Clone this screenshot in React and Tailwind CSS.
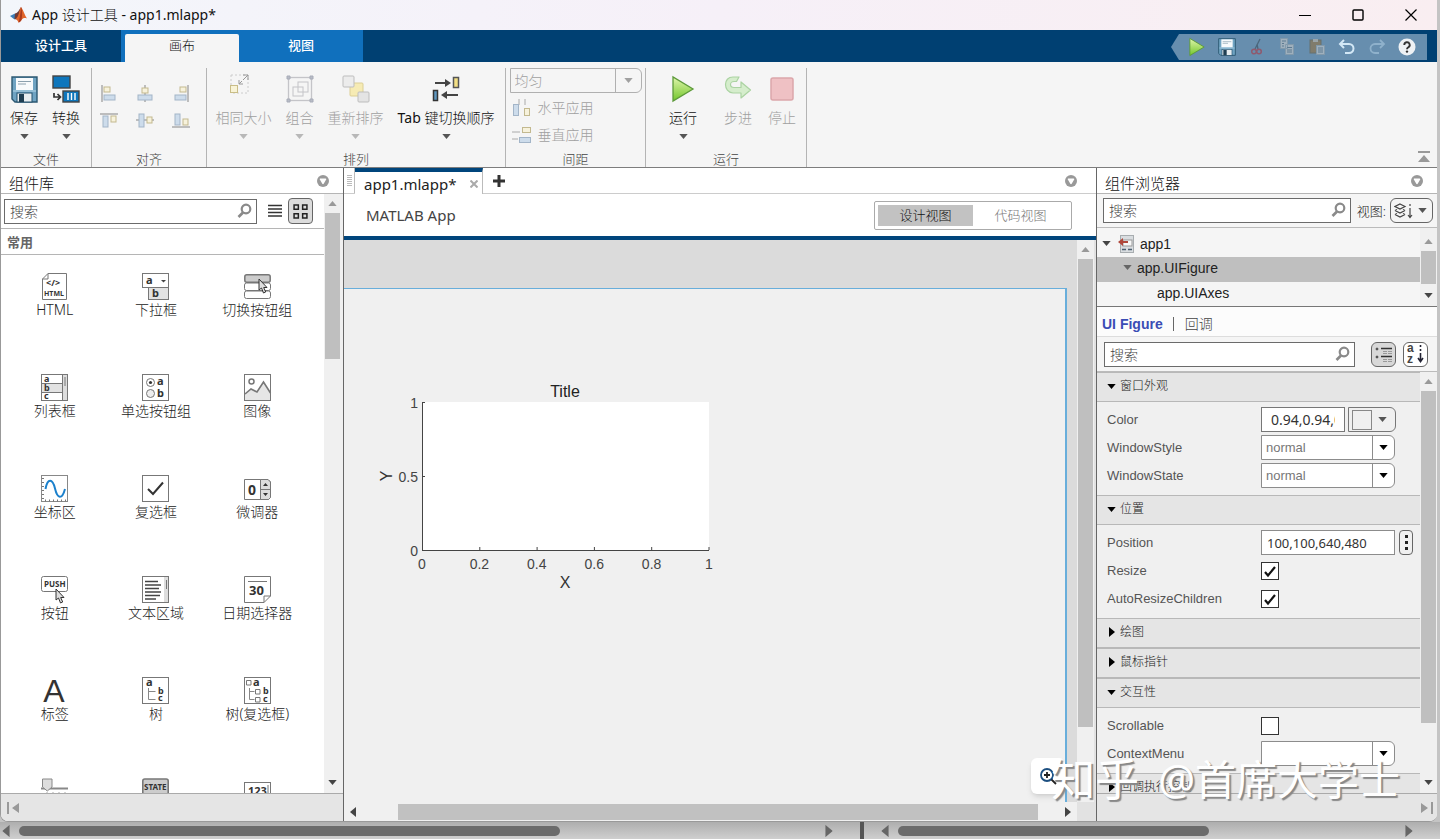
import React from 'react';
import clsx from 'clsx';

const Caret = ({ className }) => (
  <svg viewBox="0 0 10 6" className={clsx('w-[9px] h-[5px] shrink-0', className)}>
    <path d="M0 0h10L5 6z" fill="currentColor" />
  </svg>
);

const CaretRight = ({ className }) => (
  <svg viewBox="0 0 6 10" className={clsx('w-[6px] h-[10px] shrink-0', className)}>
    <path d="M0 0v10l6-5z" fill="currentColor" />
  </svg>
);

const SearchIcon = () => (
  <svg viewBox="0 0 16 16" className="w-4 h-4 absolute right-1 top-1 pointer-events-none" fill="none" stroke="#8a8a8a">
    <circle cx="9" cy="6" r="4.3" strokeWidth="2.200" />
    <path d="M6 9.500L1.500 14" strokeWidth="2.600" />
  </svg>
);

const PanelMenuIcon = () => (
  <svg viewBox="0 0 12 12" className="w-3 h-3">
    <circle cx="6" cy="6" r="6" fill="#999" />
    <path d="M3.500 4.200h5L6 8.300z" fill="#fff" stroke="#fff" strokeWidth="1.600" strokeLinejoin="round" />
  </svg>
);

const MatlabLogo = () => (
  <svg viewBox="0 0 20 18" className="w-5 h-[18px]">
    <path d="M1 10l5-2.500 3 2.500-3.500 3.500z" fill="#3c7fb8" />
    <path d="M6 7.500c3-.5 4-3.500 6-6.500l-2 9-2.500 3.500-2-.5z" fill="#6f3a35" />
    <path d="M12 1c2 2 3.500 8 6 11.500-2.500-1-4-.5-5.500 1.500-1 1.500-2 2.500-3 2.500-.5-1.500-1.500-3-3-3.500C10 11 10 4 12 1z" fill="#e0642a" />
    <path d="M12 1c1.200 2 1.500 8 .5 13-1 1.500-2 2.500-3 2.500C11 12 11.500 6 12 1z" fill="#a93a1d" />
  </svg>
);

const FloppyIcon = ({ className }) => (
  <svg viewBox="0 0 27 27" className={className}>
    <path d="M1 1h25v25H4l-3-3z" fill="#6fa3c2" stroke="#2c5872" strokeWidth="1.400" />
    <rect x="5" y="2" width="17" height="12" fill="#f7fafc" />
    <path d="M7 5.500h13M7 8h8" stroke="#8aa0ae" />
    <path d="M2 15h23" stroke="#b9d8e8" />
    <rect x="6" y="17" width="15" height="9" fill="#e8edf0" stroke="#24526f" />
    <rect x="8" y="18" width="5" height="8" fill="#1f3e52" />
  </svg>
);

const ConvertIcon = () => (
  <svg viewBox="0 0 28 28" className="w-7 h-7" fill="#0e76bc" stroke="#444" strokeWidth="1.400">
    <rect x="1" y="1" width="17" height="12" />
    <rect x="11" y="16" width="16" height="11" />
    <path d="M16 18v7M19.500 18v7M23 18v7" stroke="#fff" />
    <path d="M2 18v4h6M5.500 19l3 3-3 3" fill="none" stroke="#333" strokeWidth="1.700" />
  </svg>
);

const alignShapes = [
  { line: 'M2 0v17', a: [4, 2, 6, 5], b: [4, 10, 11, 5], label: '左对齐' },
  { line: 'M9 0v17', a: [6, 3, 6, 5], b: [2, 10, 14, 5], label: '水平居中' },
  { line: 'M16 0v17', a: [8, 2, 6, 5], b: [3, 10, 11, 5], label: '右对齐' },
  { line: 'M0 2h18', a: [11, 4, 5, 6], b: [3, 4, 5, 11], label: '顶端对齐' },
  { line: 'M0 8h18', a: [11, 5, 5, 6], b: [3, 2, 5, 13], label: '垂直居中' },
  { line: 'M0 15h18', a: [11, 7, 5, 6], b: [3, 2, 5, 11], label: '底端对齐' }
];

const AlignIcon = ({ shape }) => (
  <svg viewBox="0 0 18 18" className="w-[18px] h-[18px]">
    <path d={shape.line} stroke="#a5a5a5" strokeWidth="1.400" />
    <rect x={shape.a[0]} y={shape.a[1]} width={shape.a[2]} height={shape.a[3]} fill="#f7f2dc" stroke="#c3b98f" />
    <rect x={shape.b[0]} y={shape.b[1]} width={shape.b[2]} height={shape.b[3]} fill="#cddceb" stroke="#a3b5c8" />
  </svg>
);

const SameSizeIcon = () => (
  <svg viewBox="0 0 22 22" className="w-[22px] h-[22px] mb-2 mr-2" fill="none">
    <rect x="2" y="1" width="17" height="18" stroke="#ccc" strokeDasharray="2 2" />
    <rect x="1.500" y="11.500" width="7" height="7" fill="#f8f3d6" stroke="#c9bd87" />
    <path d="M14 1h5v5M19 1l-5 5M10 6v4h4M10 10l3-3" stroke="#999" />
  </svg>
);

const GroupIcon = () => (
  <svg viewBox="0 0 28 28" className="w-7 h-7" fill="none" stroke="#c4c4c8">
    <rect x="2.500" y="2.500" width="23" height="23" strokeWidth="1.300" />
    <rect x="7" y="12" width="10" height="9" />
    <rect x="12" y="7" width="10" height="10" />
    <path d="M1 1h3v3H1zM24 1h3v3h-3zM1 24h3v3H1zM24 24h3v3h-3z" fill="#b8bcc6" stroke="#a8acb8" />
  </svg>
);

const ReorderIcon = () => (
  <svg viewBox="0 0 28 28" className="w-7 h-7">
    <rect x="8" y="8" width="13" height="13" rx="1" fill="#f6ebb4" stroke="#dccf95" />
    <rect x="1" y="1" width="11" height="11" rx="1" fill="#ececec" stroke="#bdbdbd" />
    <rect x="16" y="17" width="11" height="10" rx="1" fill="#e4e4e4" stroke="#bdbdbd" />
  </svg>
);

const TabOrderIcon = () => (
  <svg viewBox="0 0 28 28" className="w-7 h-7">
    <path d="M3 8h13M26 20H13" stroke="#444" strokeWidth="2" />
    <path d="M13 4l6 4-6 4zM15 16l-6 4 6 4z" fill="#444" />
    <rect x="21.500" y="2.500" width="5" height="10" fill="#f3df84" stroke="#555" strokeWidth="1.500" />
    <rect x="1.500" y="15.500" width="4" height="10" fill="#5f97bf" stroke="#333" strokeWidth="1.500" />
  </svg>
);

const PlayIcon = ({ className }) => (
  <svg viewBox="0 0 24 28" className={className}>
    <defs>
      <linearGradient id="play" x1="0" y1="0" x2="0" y2="1">
        <stop offset="0" stopColor="#e0f5ac" />
        <stop offset="1" stopColor="#72c62a" />
      </linearGradient>
    </defs>
    <path d="M2 2v24l20-12z" fill="url(#play)" stroke="#5d9a3a" strokeWidth="1.300" />
  </svg>
);

const StepIcon = () => (
  <svg viewBox="0 0 28 28" className="w-7 h-7">
    <path
      d="M15 2H9C4 2 1.500 5.500 1.500 9.500S4 17.500 9 18h8v5l9.500-8L17 7v5.500h-7c-2.500 0-3.500-1.300-3.500-3S8 6.500 10 6.500h2.500z"
      fill="#d5edcc" stroke="#abd3a2" strokeWidth="1.200" strokeLinejoin="round"
    />
  </svg>
);

const StopIcon = () => (
  <svg viewBox="0 0 28 28" className="w-7 h-7">
    <rect x="3" y="3" width="22" height="22" rx="2" fill="#efc1c4" stroke="#dba6aa" strokeWidth="1.500" />
  </svg>
);

const HSpaceIcon = () => (
  <svg viewBox="0 0 20 20" className="w-5 h-5">
    <path d="M7 1v6M13 1v6" stroke="#aaa" />
    <rect x="1.500" y="6.500" width="5" height="11" fill="#cddceb" stroke="#a3b5c8" />
    <rect x="12.500" y="10.500" width="5" height="7" fill="#f7f2dc" stroke="#c3b98f" />
  </svg>
);

const VSpaceIcon = () => (
  <svg viewBox="0 0 20 20" className="w-5 h-5">
    <path d="M0 7h8M0 14h6" stroke="#aaa" />
    <rect x="10.500" y="2.500" width="8" height="5" fill="#f7f2dc" stroke="#c3b98f" />
    <rect x="7.500" y="12.500" width="11" height="5" fill="#cddceb" stroke="#a3b5c8" />
  </svg>
);

const quickActions = [
  { label: '运行', icon: <PlayIcon className="w-5 h-5" /> },
  { label: '保存', icon: <FloppyIcon className="w-[18px] h-[18px]" /> },
  {
    label: '剪切',
    icon: (
      <svg viewBox="0 0 18 18" className="w-[18px] h-[18px]" fill="none">
        <path d="M12 1L7 11M9 6l1 5" stroke="#4b667c" strokeWidth="1.300" />
        <circle cx="6" cy="13.500" r="2.300" stroke="#8f5a6e" strokeWidth="1.500" />
        <circle cx="11" cy="13.500" r="2.300" stroke="#8f5a6e" strokeWidth="1.500" />
      </svg>
    )
  },
  {
    label: '复制',
    icon: (
      <svg viewBox="0 0 18 18" className="w-[18px] h-[18px]" fill="#9fb0bd" stroke="#8199ab">
        <path d="M2.500 .5h7v10h-7zM7.500 6.500h8v10h-8z" />
        <path d="M4 3h4M4 5.500h2M4 8h2M9 9.500h5M9 12h5M9 14h5" stroke="#5d7a91" />
      </svg>
    )
  },
  {
    label: '粘贴',
    icon: (
      <svg viewBox="0 0 18 18" className="w-[18px] h-[18px]">
        <rect x="2" y="2" width="11" height="13" fill="#807c6c" stroke="#66706f" />
        <rect x="5" y="1" width="5" height="3" fill="#9aa4a8" />
        <rect x="8.500" y="7.500" width="8" height="9" fill="#9fb0bd" stroke="#8199ab" />
        <path d="M10 10h5M10 12h5M10 14h5" stroke="#5d7a91" />
      </svg>
    )
  },
  {
    label: '撤销',
    icon: (
      <svg viewBox="0 0 18 18" className="w-[18px] h-[18px]" fill="none" stroke="#d3e8f6" strokeWidth="2">
        <path d="M6 2L2 6l4 4M2 6h9a4 4 0 0 1 0 9H7" />
      </svg>
    )
  },
  {
    label: '重做',
    icon: (
      <svg viewBox="0 0 18 18" className="w-[18px] h-[18px]" fill="none" stroke="#8fb1cb" strokeWidth="1.800">
        <path d="M12 2l4 4-4 4M16 6H7a4 4 0 0 0 0 9h4" />
      </svg>
    )
  },
  {
    label: '帮助',
    icon: (
      <svg viewBox="0 0 18 18" className="w-[18px] h-[18px]">
        <circle cx="9" cy="9" r="8.500" fill="#eef1f4" />
        <path d="M6.300 7a2.700 2.700 0 1 1 4 2.300c-1 .6-1.300 1-1.300 2" fill="none" stroke="#333" strokeWidth="1.900" />
        <circle cx="9" cy="13.600" r="1.200" fill="#333" />
      </svg>
    )
  }
];

/* Component library icons, all on a 27px grid */
const LibIcon = ({ children }) => (
  <svg viewBox="0 0 27 27" className="w-[27px] h-[27px] overflow-visible" fill="none" stroke="#777" fontFamily="Noto Sans" fontWeight="bold" fontSize="10">
    {children}
  </svg>
);

const T = ({ x, y, size = 11, children }) => (
  <text x={x} y={y} fontSize={size} fill="#333" stroke="none">{children}</text>
);

const Pointer = ({ x, y }) => (
  <path d={`M${x} ${y}v11l2.500-2 2 5 2.200-1-2-4.500h3.300z`} fill="#ddd" stroke="#333" />
);

const library = [
  {
    name: 'HTML',
    icon: (
      <LibIcon>
        <path d="M7 .5h18.500v26h-24V6zM7 .5V6H1.500" />
        <T x="5" y="13" size={9}>{'</>'}</T>
        <T x="3" y="23" size={7}>HTML</T>
      </LibIcon>
    )
  },
  {
    name: '下拉框',
    icon: (
      <LibIcon>
        <rect x=".5" y=".5" width="26" height="14" />
        <rect x="6.500" y="14.500" width="20" height="12" fill="#e2e2e2" />
        <T x="4" y="11">a</T>
        <T x="10" y="24">b</T>
        <path d="M19 7h5l-2.500 2.500z" fill="#444" stroke="none" />
      </LibIcon>
    )
  },
  {
    name: '切换按钮组',
    icon: (
      <LibIcon>
        <rect x=".8" y="1.800" width="25.400" height="7.500" rx="2" fill="#ccc" strokeWidth="1.500" />
        <rect x=".5" y="10" width="26" height="7.500" rx="2" />
        <rect x=".5" y="18" width="26" height="7.500" rx="2" />
        <Pointer x={15} y={6} />
      </LibIcon>
    )
  },
  {
    name: '列表框',
    icon: (
      <LibIcon>
        <rect x=".5" y=".5" width="26" height="26" />
        <rect x="1" y="10" width="20" height="8" fill="#e2e2e2" stroke="none" />
        <rect x="21.500" y=".5" width="5" height="26" fill="#ddd" />
        <path d="M1 9.500h20M1 18.500h20M24 3v9" />
        <T x="3" y="8" size={9}>a</T>
        <T x="3" y="17" size={9}>b</T>
        <T x="3" y="25" size={9}>c</T>
      </LibIcon>
    )
  },
  {
    name: '单选按钮组',
    icon: (
      <LibIcon>
        <rect x=".5" y=".5" width="26" height="26" />
        <circle cx="8.500" cy="8.500" r="4" />
        <circle cx="8.500" cy="8.500" r="1.600" fill="#333" stroke="none" />
        <circle cx="8.500" cy="19.500" r="4" fill="#eee" />
        <T x="15" y="11">a</T>
        <T x="15" y="23">b</T>
      </LibIcon>
    )
  },
  {
    name: '图像',
    icon: (
      <LibIcon>
        <path d="M1 20l6-5 6 3 6.500-10 7 11V26H1z" fill="#e6e6e6" stroke="none" />
        <rect x=".5" y=".5" width="26" height="26" />
        <circle cx="7.500" cy="7.500" r="2.500" strokeWidth="1.500" />
        <path d="M1 20l6-5 6 3 6.500-10 7 11" strokeWidth="1.600" />
      </LibIcon>
    )
  },
  {
    name: '坐标区',
    icon: (
      <LibIcon>
        <rect x=".5" y=".5" width="26" height="26" stroke="#888" />
        <path d="M2 3v22M4 25.500h21" strokeDasharray="1 3" strokeWidth="2" />
        <path d="M4.500 14c2-11 7-11 9.500-.5s7 11.500 10 .5" stroke="#1b80cc" strokeWidth="2" />
      </LibIcon>
    )
  },
  {
    name: '复选框',
    icon: (
      <LibIcon>
        <rect x=".5" y=".5" width="26" height="26" />
        <path d="M6 14l5 5L21 7.500" stroke="#333" strokeWidth="2" />
      </LibIcon>
    )
  },
  {
    name: '微调器',
    icon: (
      <LibIcon>
        <path d="M.5 4.500H24l2.500 2.500v15.500l-2 2H.5z" />
        <path d="M16.500 4.500H24l2.500 2.500v15.500l-2 2h-8z" fill="#ddd" />
        <path d="M16.500 14.500h10" />
        <path d="M19 11l2.500-3 2.500 3zM19 18l2.500 3 2.500-3z" fill="#333" stroke="none" />
        <T x="4" y="20" size={14}>0</T>
      </LibIcon>
    )
  },
  {
    name: '按钮',
    icon: (
      <LibIcon>
        <rect x=".5" y=".5" width="26" height="15" rx="2" />
        <T x="3" y="11" size={8}>PUSH</T>
        <Pointer x={15} y={13} />
      </LibIcon>
    )
  },
  {
    name: '文本区域',
    icon: (
      <LibIcon>
        <rect x=".5" y=".5" width="26" height="26" />
        <rect x="22" y="1" width="4" height="25" fill="#ddd" stroke="none" />
        <path d="M3 5.500h13M3 9h16M3 12.500h14M3 16h16M3 19.500h15M3 23h11" stroke="#444" strokeWidth="1.500" />
        <path d="M24.500 4v9" />
      </LibIcon>
    )
  },
  {
    name: '日期选择器',
    icon: (
      <LibIcon>
        <path d="M.5 .5h26V20l-6.500 6.500H.5zM20 26.500V20h6.500M4 5.500h19" />
        <T x="5" y="19" size={13}>30</T>
      </LibIcon>
    )
  },
  {
    name: '标签',
    icon: (
      <LibIcon>
        <text x="13" y="25" textAnchor="middle" fontFamily="Liberation Sans" fontWeight="400" fontSize="32" fill="#333" stroke="none">A</text>
      </LibIcon>
    )
  },
  {
    name: '树',
    icon: (
      <LibIcon>
        <rect x=".5" y=".5" width="26" height="26" />
        <path d="M6.500 11v11.500h7M6.500 14.500h7" stroke="#888" />
        <T x="4" y="9">a</T>
        <T x="16" y="17" size={9}>b</T>
        <T x="16" y="24" size={9}>c</T>
      </LibIcon>
    )
  },
  {
    name: '树(复选框)',
    icon: (
      <LibIcon>
        <rect x=".5" y=".5" width="26" height="26" />
        <path d="M5.500 11v11.500h5M5.500 14.500h5" stroke="#888" />
        <path d="M2.500 3.500h4.500v4.500H2.500zM11.500 12.500H16V17h-4.500zM11.500 20.500H16V25h-4.500z" />
        <T x="9" y="9">a</T>
        <T x="19" y="17" size={9}>b</T>
        <T x="19" y="25" size={9}>c</T>
      </LibIcon>
    )
  },
  {
    name: '滑块',
    icon: (
      <LibIcon>
        <path d="M0 10.500h27" stroke="#888" strokeWidth="2" />
        <path d="M1.500 1h9.500v8l-4.700 4-4.800-4z" fill="#ddd" stroke="#888" />
        <path d="M6 14v2M12 14v2M18 14v2M24 14v2" stroke="#aaa" />
      </LibIcon>
    )
  },
  {
    name: '状态按钮',
    icon: (
      <LibIcon>
        <rect x=".8" y="1" width="25.400" height="17" rx="2" fill="#ccc" strokeWidth="1.600" />
        <T x="2" y="12" size={8}>STATE</T>
      </LibIcon>
    )
  },
  {
    name: '编辑字段',
    icon: (
      <LibIcon>
        <rect x=".5" y="4.500" width="26" height="18" />
        <T x="4" y="17">123</T>
        <path d="M24 7v12" />
      </LibIcon>
    )
  }
];

const ToolButton = ({ icon, label, disabled, caret = true, className }) => (
  <button
    disabled={disabled}
    className={clsx('flex flex-col items-center pt-1.5 text-sm leading-5 whitespace-nowrap', disabled ? 'text-[#a0a0a0]' : 'text-[#111]', className)}
  >
    <span className="h-[30px] mb-1 flex items-center justify-center">{icon}</span>
    <span>{label}</span>
    {caret && <Caret className={clsx('mt-1.5', disabled ? 'text-[#b8b8b8]' : 'text-[#555]')} />}
  </button>
);

const ToolSection = ({ title, className, children }) => (
  <section className={clsx('flex flex-col h-[99px] border-r border-[#b4b4b4] shrink-0', className)}>
    <div className="flex-1 flex justify-center">{children}</div>
    <h2 className="text-[13px] leading-4 text-center text-[#444]">{title}</h2>
  </section>
);

const SearchBox = ({ id, className }) => (
  <div className={clsx('relative flex-1', className)}>
    <label htmlFor={id} className="sr-only">搜索</label>
    <input
      id={id}
      type="text"
      placeholder="搜索"
      className="block w-full h-[25px] bg-white border border-[#6b6b6b] px-[5px] text-sm leading-5 placeholder:text-[#444] outline-none"
    />
    <SearchIcon />
  </div>
);

const VScroll = ({ lead, thumb, className }) => (
  <div className={clsx('w-[17px] shrink-0 flex flex-col items-center bg-[#f0f0f0]', className)}>
    <div className="h-[19px] shrink-0 flex items-center"><Caret className="rotate-180 text-[#999]" /></div>
    <div className={clsx('w-[15px] bg-[#bfbfbf] shrink', thumb)} />
    <div className="flex-1" />
    <div className={clsx('shrink-0 flex items-center', lead || 'h-[22px]')}><Caret className="text-[#444]" /></div>
  </div>
);

const PanelHeader = ({ title }) => (
  <header className="h-[26px] shrink-0 flex items-center justify-between bg-white border-b border-[#b5b5b5] pl-2 pr-3.5">
    <h2 className="text-[15px] leading-5 pt-1 text-[#111]">{title}</h2>
    <button aria-label="面板菜单"><PanelMenuIcon /></button>
  </header>
);

const Group = ({ title, open, children }) => (
  <section>
    <button className="w-full h-[30px] flex items-center gap-1 pl-2.5 pb-0.5 bg-[#e5e5e5] border-t border-b border-[#b8b8b8] text-xs text-[#222]">
      <span className="w-[9px] flex justify-center text-black">{open ? <Caret /> : <CaretRight />}</span>
      <span>{title}</span>
    </button>
    {open && <div className="flex flex-col gap-[3px] pt-[5px] pb-[7px]">{children}</div>}
  </section>
);

const Prop = ({ name, children }) => (
  <div className="h-[25px] flex items-center pl-2.5 font-[Liberation_Sans]">
    <label htmlFor={name} className="w-[154px] shrink-0 text-[13px] text-[#555]">{name}</label>
    {children}
  </div>
);

const DropDown = ({ id, value }) => (
  <div className="relative w-[134px] h-[25px]">
    <select id={id} className="appearance-none w-full h-full pl-1 text-[13px] text-[#777] bg-white border border-[#8c8c8c] rounded-r-md outline-none">
      <option>{value}</option>
    </select>
    <span className="absolute right-px inset-y-px w-[22px] border-l border-[#8c8c8c] flex items-center justify-center pointer-events-none">
      <Caret />
    </span>
  </div>
);

const Check = ({ id, checked }) => (
  <div className="relative w-[18px] h-[18px]">
    <input id={id} type="checkbox" defaultChecked={checked} className="peer appearance-none block w-[18px] h-[18px] bg-white border border-[#333]" />
    <svg viewBox="0 0 18 18" className="absolute inset-0 w-[18px] h-[18px] hidden peer-checked:block pointer-events-none">
      <path d="M4 10l3 3.500L14 5" fill="none" stroke="#111" strokeWidth="2.200" />
    </svg>
  </div>
);

const xTicks = [0, 0.2, 0.4, 0.6, 0.8, 1];
const yTicks = [0, 0.5, 1];

const Axes = () => (
  <svg width="350" height="220" viewBox="0 0 350 220" className="absolute left-[30px] top-[91px]" fontFamily="Liberation Sans" fontSize="14" fill="#444">
    <rect x="48" y="22" width="287" height="148" fill="#fff" />
    <path d="M48.500 22v148.500H335" fill="none" stroke="#444" />
    {xTicks.map((t) => (
      <g key={t}>
        <path d={`M${48.5 + t * 286.5} 170v-3`} stroke="#444" />
        <text x={48 + t * 287} y="189" textAnchor="middle">{t}</text>
      </g>
    ))}
    {yTicks.map((t) => (
      <g key={t}>
        <path d={`M48 ${170.5 - t * 148}h3`} stroke="#444" />
        <text x="44" y={175.5 - t * 148} textAnchor="end">{t}</text>
      </g>
    ))}
    <text x="191" y="17" fontSize="16" fill="#222" textAnchor="middle">Title</text>
    <text x="191" y="208" fontSize="16" fill="#333" textAnchor="middle">X</text>
    <text x="18" y="96" fontSize="16" fill="#333" textAnchor="middle" transform="rotate(-90 18 96)">Y</text>
  </svg>
);

const TitleBar = () => (
  <div className="h-[30px] shrink-0 flex items-center bg-linear-to-r from-[#f3f6fb] via-[#f6f0f8] to-[#f9eef1] pl-2">
    <MatlabLogo />
    <h1 className="ml-[3px] flex-1 text-sm leading-5 text-[#111]">
      <span className="font-normal">App</span> 设计工具 <span className="font-normal">- app1.mlapp*</span>
    </h1>
    <div className="flex h-full text-black">
      <button aria-label="最小化" className="w-[53px] flex items-center justify-center">
        <svg viewBox="0 0 12 12" className="w-3 h-3"><path d="M0 6.500h12" stroke="currentColor" /></svg>
      </button>
      <button aria-label="最大化" className="w-[53px] flex items-center justify-center">
        <svg viewBox="0 0 12 12" className="w-3 h-3"><rect x="1" y="1" width="10" height="10" rx="1" fill="none" stroke="currentColor" strokeWidth="1.400" /></svg>
      </button>
      <button aria-label="关闭" className="w-[53px] flex items-center justify-center">
        <svg viewBox="0 0 12 12" className="w-3 h-3"><path d="M.5.5l11 11M11.500.5l-11 11" stroke="currentColor" strokeWidth="1.200" /></svg>
      </button>
    </div>
  </div>
);

const RibbonTabs = () => (
  <div className="h-8 shrink-0 flex items-stretch bg-[#004072] text-[13px] leading-[18px] text-white">
    <button className="w-[120px] pb-0.5 font-medium">设计工具</button>
    <button className="w-[118px] bg-[#1070bd] pt-1 pl-1">
      <span className="flex h-full pt-0.5 justify-center bg-[#f5f5f5] rounded-t-xs text-[#111]">画布</span>
    </button>
    <button className="w-[124px] pb-0.5 bg-[#1070bd] font-medium">视图</button>
    <div className="ml-auto mr-2.5 mt-1 mb-0.5 pl-[11px] pr-[5px] flex bg-[#678eae] [clip-path:polygon(8px_0,100%_0,100%_100%,8px_100%,0_50%)]">
      {quickActions.map((action) => (
        <button key={action.label} aria-label={action.label} className="w-[30px] flex items-center justify-center">
          {action.icon}
        </button>
      ))}
    </div>
  </div>
);

const Toolstrip = () => (
  <div className="shrink-0 flex pt-1.5 bg-[#f5f5f5] border-b border-[#7d7d7d]">
    <ToolSection title="文件" className="w-[91px]">
      <div className="flex pr-0.5">
        <ToolButton className="w-[42px]" icon={<FloppyIcon className="w-[27px] h-[27px]" />} label="保存" />
        <ToolButton className="w-[42px]" icon={<ConvertIcon />} label="转换" />
      </div>
    </ToolSection>
    <ToolSection title="对齐" className="w-[115px]">
      <div className="grid grid-cols-3 content-start gap-x-[18px] gap-y-[9px] pt-[17px] pr-2">
        {alignShapes.map((shape) => (
          <button key={shape.label} aria-label={shape.label} disabled><AlignIcon shape={shape} /></button>
        ))}
      </div>
    </ToolSection>
    <ToolSection title="排列" className="w-[299px]">
      <div className="flex gap-3.5 pr-0.5">
        <ToolButton icon={<SameSizeIcon />} label="相同大小" disabled />
        <ToolButton icon={<GroupIcon />} label="组合" disabled />
        <ToolButton icon={<ReorderIcon />} label="重新排序" disabled />
        <ToolButton icon={<TabOrderIcon />} label={<><span className="font-normal">Tab</span> 键切换顺序</>} />
      </div>
    </ToolSection>
    <ToolSection title="间距" className="w-[140px]">
      <div className="flex flex-col items-start text-sm leading-5 text-[#a0a0a0]">
        <div className="relative w-[132px] h-[25px] mb-[5px]">
          <label htmlFor="spacing" className="sr-only">间距</label>
          <select id="spacing" disabled className="appearance-none w-full h-full pl-1 border border-[#b0b0b0] rounded-r-md opacity-100">
            <option>均匀</option>
          </select>
          <span className="absolute right-px inset-y-px w-[26px] border-l border-[#b0b0b0] flex items-center justify-center pointer-events-none">
            <Caret />
          </span>
        </div>
        <button disabled className="flex items-center gap-1.5 pl-0.5 mb-[7px]"><HSpaceIcon />水平应用</button>
        <button disabled className="flex items-center gap-1.5 pl-0.5"><VSpaceIcon />垂直应用</button>
      </div>
    </ToolSection>
    <ToolSection title="运行" className="w-[161px]">
      <div className="flex pl-0.5">
        <ToolButton className="w-[60px]" icon={<PlayIcon className="w-6 h-7" />} label="运行" />
        <ToolButton className="w-[50px]" icon={<StepIcon />} label="步进" caret={false} disabled />
        <ToolButton className="w-[38px]" icon={<StopIcon />} label="停止" caret={false} disabled />
      </div>
    </ToolSection>
    <button aria-label="最小化工具条" className="ml-auto mr-1.5 mb-1 self-end">
      <svg viewBox="0 0 14 12" className="w-3.5 h-3"><path d="M1 0h12v2H1zM7 4l6 7H1z" fill="#999" /></svg>
    </button>
  </div>
);

const LibraryPanel = () => (
  <aside className="w-[343px] shrink-0 flex flex-col bg-[#f0f0f0] border-r border-[#666]">
    <PanelHeader title="组件库" />
    <div className="flex-1 min-h-0 flex pr-0.5">
      <div className="flex-1 min-h-0 flex flex-col bg-white">
        <div className="h-[35px] shrink-0 flex items-center pl-[3px] pr-[11px] border-b border-[#b5b5b5]">
          <SearchBox id="library-search" />
          <button aria-label="列表视图" className="ml-[11px] mr-1.5">
            <svg viewBox="0 0 14 14" className="w-3.5 h-3.5" stroke="#333" strokeWidth="1.300"><path d="M0 1.500h14M0 5h14M0 8.500h14M0 12h14" /></svg>
          </button>
          <button aria-label="网格视图" className="w-[25px] h-[26px] flex items-center justify-center bg-[#dcdcdc] border border-[#666] rounded">
            <svg viewBox="0 0 14 14" className="w-[15px] h-[15px]" fill="none" stroke="#222" strokeWidth="1.400"><path d="M1 1h4v4H1zM9 1h4v4H9zM1 9h4v4H1zM9 9h4v4H9z" /></svg>
          </button>
        </div>
        <h3 className="h-[26px] shrink-0 flex items-center pl-1.5 pt-0.5 text-[13px] font-bold text-[#666] border-b border-[#b5b5b5]">常用</h3>
        <ul className="flex-1 min-h-0 overflow-hidden grid grid-cols-3 auto-rows-[101px] content-start pt-[18px] pl-[3px] pr-4">
          {library.map((item) => (
            <li key={item.name} className="flex flex-col items-center text-sm leading-5 text-[#222]">
              {item.icon}
              <span className="whitespace-nowrap">{item.name}</span>
            </li>
          ))}
        </ul>
      </div>
      <VScroll thumb="h-[146px]" />
    </div>
    <footer className="h-7 shrink-0 flex items-center pl-1.5 bg-[#e5e5e5] border-t border-[#aaa]">
      <button aria-label="折叠左侧面板">
        <svg viewBox="0 0 13 12" className="w-[13px] h-3" fill="#999"><path d="M0 0h2v12H0zM12 1v10L5 6z" /></svg>
      </button>
    </footer>
  </aside>
);

const CanvasPanel = () => (
  <main className="flex-1 min-w-0 flex flex-col bg-white">
    <div className="h-[26px] shrink-0 flex border-b border-[#ccc]">
      <div className="w-[11px] flex items-center justify-center border-r border-[#bbb]">
        <svg viewBox="0 0 5 12" className="w-[5px] h-3" stroke="#bbb"><path d="M0 .5h5M0 2.500h5M0 4.500h5M0 6.500h5M0 8.500h5M0 10.500h5" /></svg>
      </div>
      <div className="relative z-10 h-[26px] w-32 flex items-center justify-between pl-[9px] pr-1 pt-0.5 bg-white border-t-4 border-t-[#00457c] border-r border-r-[#bbb] text-[15px] font-normal text-[#222]">
        <span>app1.mlapp*</span>
        <button aria-label="关闭选项卡">
          <svg viewBox="0 0 8 8" className="w-2 h-2" stroke="#aaa" strokeWidth="2"><path d="M.5.5l7 7M7.500.5l-7 7" /></svg>
        </button>
      </div>
      <button aria-label="新建选项卡" className="ml-2.5">
        <svg viewBox="0 0 12 12" className="w-3 h-3" stroke="#333" strokeWidth="3"><path d="M6 0v12M0 6h12" /></svg>
      </button>
      <button aria-label="面板菜单" className="ml-auto mr-[19px]"><PanelMenuIcon /></button>
    </div>
    <div className="h-[46px] shrink-0 flex items-center justify-between pl-[22px] pr-6 border-b-4 border-[#00457c]">
      <h2 className="text-[15px] leading-5 font-normal text-[#444]">MATLAB App</h2>
      <div className="h-[29px] w-[198px] p-[3px] flex border border-[#aaa] rounded-xs text-[13px] leading-[18px]">
        <button className="flex-1 bg-[#c2c2c2] text-[#111]">设计视图</button>
        <button className="flex-1 text-[#777]">代码视图</button>
      </div>
    </div>
    <div className="flex-1 min-h-0 flex">
      <div className="flex-1 min-w-0 flex flex-col">
        <div className="flex-1 min-h-0 pt-12 pr-2.5 bg-[#dbdbdb]">
          <div className="relative h-full bg-[#f0f0f0] border-t border-r-2 border-[#68aedb]">
            <Axes />
            <button aria-label="缩放" className="absolute right-0 bottom-2 w-[34px] h-9 flex items-center justify-center bg-white rounded-md shadow-md">
              <svg viewBox="0 0 18 18" className="w-[18px] h-[18px]" fill="none">
                <circle cx="8" cy="8" r="6" stroke="#1c4f80" strokeWidth="1.800" />
                <path d="M8 5v6M5 8h6M12.500 12.500L17 17" stroke="#222" strokeWidth="1.800" />
              </svg>
            </button>
          </div>
        </div>
        <div className="h-[19px] shrink-0 flex items-center bg-[#f0f0f0]">
          <CaretRight className="rotate-180 text-[#444] ml-1.5" />
          <div className="w-[42px]" />
          <div className="flex-1 h-4 bg-[#c1c1c1]" />
          <div className="w-[27px]" />
          <CaretRight className="text-[#444] mr-1.5" />
        </div>
      </div>
      <div className="w-[19px] pr-px flex flex-col bg-[#e2e2e2]">
        <VScroll thumb="h-[468px]" lead="h-4" className="flex-1" />
        <div className="h-[19px]" />
      </div>
    </div>
  </main>
);

const BrowserPanel = () => (
  <aside className="w-[341px] shrink-0 flex flex-col bg-[#f5f5f5] border-l border-[#666]">
    <PanelHeader title="组件浏览器" />
    <div className="h-[34px] shrink-0 flex items-center pl-1.5 pr-1 border-b border-[#bbb]">
      <SearchBox id="browser-search" />
      <span className="ml-1.5 mr-1 text-[13px] leading-5 text-[#222]">视图:</span>
      <button aria-label="视图" className="w-[43px] h-[25px] flex items-center justify-between pl-[3px] pr-[5px] border border-[#666] rounded-md">
        <svg viewBox="0 0 20 16" className="w-5 h-4" fill="none" stroke="#444" strokeWidth="1.200">
          <path d="M6 1l5 2.500L6 6 1 3.500zM1 7.500L6 10l5-2.500M1 11.500L6 14l5-2.500M1 7.500l2-1M11 7.500l-2-1M1 11.500l2-1M11 11.500l-2-1" />
          <path d="M16 1v2M16 5v9M14 12l2 2.500 2-2.500" />
        </svg>
        <Caret className="text-[#555]" />
      </button>
    </div>
    <div className="h-[79px] shrink-0 flex border-b border-[#777]">
      <ul className="flex-1 pt-1 font-[Liberation_Sans] text-sm text-[#222]">
        <li className="h-[25px] flex items-center pl-[5px] pb-0.5">
          <Caret className="text-[#444]" />
          <svg viewBox="0 0 16 18" className="w-4 h-[18px] ml-[7px] mr-1.5">
            <rect x="2.500" y=".5" width="13" height="17" fill="#d9dde0" stroke="#a8adb0" />
            <rect x="5" y="5" width="9" height="6" fill="#f8f8f8" stroke="#999" />
            <path d="M0 7l5-4v3h5v2H5v3z" fill="#b0483c" />
            <path d="M4 14.500h4M10 14.500h4" stroke="#4c5f70" strokeWidth="1.500" />
          </svg>
          app1
        </li>
        <li className="h-[25px] flex items-center gap-[5px] pl-[26px] pb-1 bg-[#bfbfbf]">
          <Caret className="text-[#666]" />app.UIFigure
        </li>
        <li className="h-[25px] flex items-center pl-[60px] pb-1">app.UIAxes</li>
      </ul>
      <VScroll thumb="h-[36px]" className="pt-1" />
    </div>
    <div className="h-[30px] shrink-0 flex items-center pl-[5px] pt-1 bg-[#fcfcfc] border-b border-[#ddd] text-sm">
      <button className="font-[Liberation_Sans] font-bold text-[#3a4db5]">UI Figure</button>
      <span className="w-px h-3.5 ml-2.5 mr-[11px] bg-[#666]" />
      <button className="text-[#444]">回调</button>
    </div>
    <div className="h-[35px] shrink-0 flex items-center pl-[7px] pr-[9px] border-b border-[#bbb]">
      <SearchBox id="prop-search" />
      <button aria-label="分组显示" className="ml-4 w-[25px] h-[25px] flex items-center justify-center bg-[#d8d8d8] border border-[#666] rounded-md">
        <svg viewBox="0 0 18 18" className="w-[18px] h-[18px]" stroke="#555">
          <path d="M6 3.500h11M6 11.500h11" strokeWidth="1.400" stroke="#333" />
          <path d="M8 6.500h4M13 6.500h4M8 8.500h4M13 8.500h4M8 14.500h4M13 14.500h4M8 16.500h4M13 16.500h4" stroke="#999" />
          <circle cx="2" cy="4" r="1" fill="#333" /><circle cx="2" cy="12" r="1" fill="#333" />
        </svg>
      </button>
      <button aria-label="按字母排序" className="ml-[7px] w-[25px] h-[25px] flex items-center justify-center bg-white border border-[#666] rounded-md">
        <svg viewBox="0 0 20 20" className="w-5 h-5 overflow-visible" fontFamily="Liberation Sans" fontSize="12" fontWeight="bold" fill="#444">
          <text x="1" y="8">a</text>
          <text x="1" y="19">z</text>
          <path d="M14.500 1v2M14.500 5v2M14.500 9v7M12 14l2.500 3.500L17 14" fill="none" stroke="#223" strokeWidth="1.600" />
        </svg>
      </button>
    </div>
    <div className="flex-1 min-h-0 flex bg-[#f0f0f0]">
      <div className="flex-1 min-h-0 overflow-hidden">
        <Group title="窗口外观" open>
          <Prop name="Color">
            <input id="Color" type="text" defaultValue="0.94,0.94,0.94" className="w-[84px] h-[25px] px-[9px] font-['Noto_Sans'] font-normal text-sm leading-5 text-[#333] bg-white border border-[#777] outline-none" />
            <button aria-label="选择颜色" className="ml-[3px] w-12 h-[25px] flex items-center justify-between pl-[3px] pr-2 border border-[#777] rounded-r-md">
              <span className="w-5 h-5 bg-[#f0f0f0] border border-[#888]" />
              <Caret className="text-[#555]" />
            </button>
          </Prop>
          <Prop name="WindowStyle"><DropDown id="WindowStyle" value="normal" /></Prop>
          <Prop name="WindowState"><DropDown id="WindowState" value="normal" /></Prop>
        </Group>
        <Group title="位置" open>
          <Prop name="Position">
            <input id="Position" type="text" defaultValue="100,100,640,480" className="w-[134px] h-[25px] px-[5px] font-['Noto_Sans'] font-normal text-[13px] leading-5 text-[#333] bg-white border border-[#8c8c8c] outline-none" />
            <button aria-label="更多" className="ml-1 w-[14px] h-[25px] flex items-center justify-center border border-[#666] rounded">
              <svg viewBox="0 0 3 17" className="w-[3px] h-[17px]"><path d="M0 1h3v3H0zM0 7h3v3H0zM0 13h3v3H0z" fill="#222" /></svg>
            </button>
          </Prop>
          <Prop name="Resize"><Check id="Resize" checked /></Prop>
          <Prop name="AutoResizeChildren"><Check id="AutoResizeChildren" checked /></Prop>
        </Group>
        <Group title="绘图" />
        <Group title="鼠标指针" />
        <Group title="交互性" open>
          <Prop name="Scrollable"><Check id="Scrollable" /></Prop>
          <Prop name="ContextMenu"><DropDown id="ContextMenu" value="" /></Prop>
        </Group>
        <Group title="回调执行控制" />
      </div>
      <VScroll thumb="h-[332px]" />
    </div>
    <footer className="h-7 shrink-0 flex items-center justify-end pr-1 bg-[#e5e5e5] border-t border-[#aaa]">
      <button aria-label="折叠右侧面板">
        <svg viewBox="0 0 13 12" className="w-[13px] h-3" fill="#999"><path d="M11 0h2v12h-2zM1 1v10l7-5z" /></svg>
      </button>
    </footer>
  </aside>
);

/* Scroll bars of the desktop behind the window */
const BackdropBar = () => (
  <div className="h-[17px] shrink-0 flex bg-linear-to-b from-[#aeaeae] to-[#cfcfcf] text-[#666]">
    <div className="w-3/5 flex items-center pl-[3px] pr-7 border-r-4 border-[#555]">
      <CaretRight className="rotate-180 scale-125" />
      <div className="ml-2.5 h-2.5 w-[541px] rounded-full bg-[#6b6b6b]" />
      <CaretRight className="ml-auto scale-125" />
    </div>
    <div className="flex-1 flex items-center pl-[18px] pr-7">
      <CaretRight className="rotate-180 scale-125" />
      <div className="ml-2.5 h-2.5 w-[311px] rounded-full bg-[#6b6b6b]" />
      <CaretRight className="ml-auto scale-125" />
    </div>
  </div>
);

export default function App() {
  return (
    <div className="relative h-screen flex flex-col overflow-hidden bg-[#c4c4c4] font-light font-['Noto_Sans','Noto_Sans_CJK_SC',sans-serif]">
      <div className="flex-1 min-h-0 mr-[3px] flex flex-col overflow-hidden rounded-b-lg border-l border-b border-[#999]">
        <TitleBar />
        <RibbonTabs />
        <Toolstrip />
        <div className="flex-1 min-h-0 flex">
          <LibraryPanel />
          <CanvasPanel />
          <BrowserPanel />
        </div>
      </div>
      <BackdropBar />
      <p className="absolute right-10 bottom-[30px] flex items-center gap-[19px] text-[41px] leading-[60px] font-normal whitespace-nowrap text-white [text-shadow:2px_2px_1px_#888] pointer-events-none">
        <span className="text-[44px]">知乎</span>
        <span>@首席大学士</span>
      </p>
    </div>
  );
}
